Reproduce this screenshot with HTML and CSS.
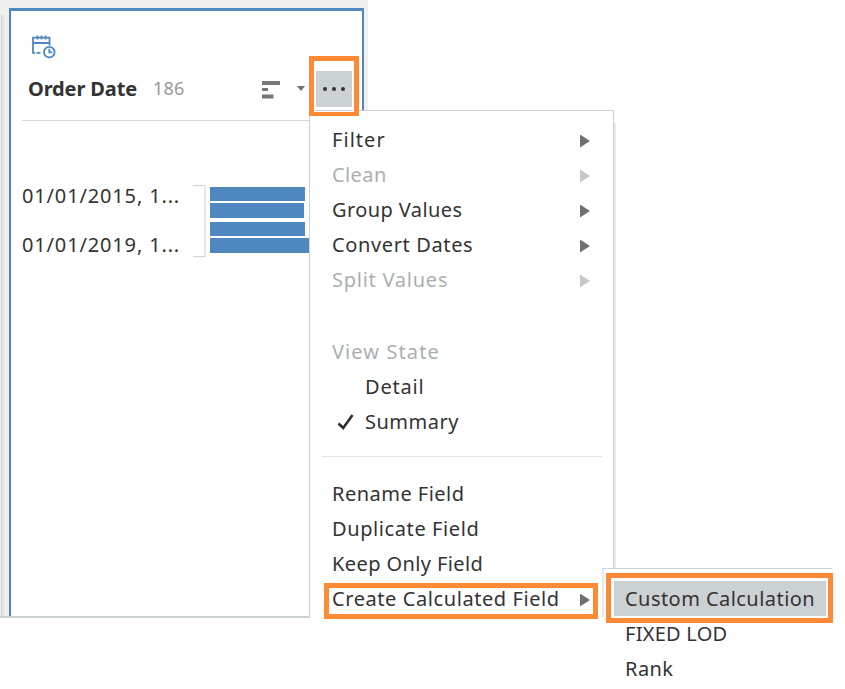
FILE: index.html
```html
<!DOCTYPE html>
<html lang="en">
<head>
<meta charset="utf-8">
<title>Order Date</title>
<link rel="stylesheet" href="styles.css">
</head>
<body>
<main class="workspace">
  <div class="pane-edge"></div>
  <section class="card">
    <svg class="date-icon" width="26" height="26" viewBox="0 0 26 26" fill="none" stroke="#4f88bf" stroke-width="1.8">
      <path d="M9.500 18.900H5.500M4 18.900H2V3.700h16.500v7.800M2 9h16.500M6.500 1.500v4M10.500 1.500v4M14.500 1.500v4"/>
      <circle cx="18.300" cy="18.200" r="5.300"/>
      <path d="M18.300 14.800v3.600h3"/>
    </svg>
    <header class="card-head">
      <h1 class="title">Order Date</h1>
      <span class="count">186</span>
      <svg class="sort" width="19" height="18" viewBox="0 0 19 18" fill="#777"><path d="M0 0h18v4H0zM0 7h6v3H0zM0 13.500h11.500v4H0z"/></svg>
      <svg class="caret" width="8" height="5" viewBox="0 0 8 5" fill="#707070"><path d="M0 0h8L4 5z"/></svg>
      <button class="more" aria-label="More"><i></i><i></i><i></i></button>
    </header>
    <div class="summary">
      <div class="labels"><span>01/01/2015, 1...</span><span>01/01/2019, 1...</span></div>
      <div class="bracket"></div>
      <div class="bars"><i class="bar"></i><i class="bar second"></i><i class="bar third"></i><i class="bar last"></i></div>
    </div>
  </section>
</main>

<nav class="menu">
  <div class="item filter">Filter<b class="arrow"></b></div>
  <div class="item off clean">Clean<b class="arrow"></b></div>
  <div class="item group">Group Values<b class="arrow"></b></div>
  <div class="item convert">Convert Dates<b class="arrow"></b></div>
  <div class="item off split">Split Values<b class="arrow"></b></div>
  <div class="item off heading">View State</div>
  <div class="item sub detail">Detail</div>
  <div class="item sub summ"><svg class="check" width="18" height="18" viewBox="0 0 18 18" fill="none" stroke="#2e2e2e" stroke-width="2.600"><path d="M1.500 10.500l4.700 4.500L15.500 2"/></svg>Summary</div>
  <hr class="divider">
  <div class="item rename">Rename Field</div>
  <div class="item duplicate">Duplicate Field</div>
  <div class="item keep">Keep Only Field</div>
  <div class="item create">Create Calculated Field<b class="arrow"></b></div>
</nav>

<nav class="submenu">
  <div class="choice active">Custom Calculation</div>
  <div class="choice fixed">FIXED LOD</div>
  <div class="choice rank">Rank</div>
</nav>

<div class="mark mark-more"></div>
<div class="mark mark-create"></div>
<div class="mark mark-custom"></div>
</body>
</html>
```
FILE: styles.css
```css
* { box-sizing: border-box; }
body {
  margin: 0;
  height: 689px;
  overflow: hidden;
  position: relative;
  background: #fff;
  color: #333;
  font: 20px/35px "Noto Sans", sans-serif;
}
.workspace {
  display: flex;
  width: 368px;
  height: 618px;
  padding: 8px 4px 0 1px;
  background: #f0f0f0;
  border-bottom: 2px solid #ccd1d5;
}
.pane-edge {
  width: 4px;
  margin: 7px 4px 0 0;
  border-left: 1px solid #ccd1d5;
  background: #e6e8e8;
}
.card {
  width: 355px;
  padding: 23px 0 0 11px;
  background: #fff;
  border: 2px solid #4f88bf;
  border-top-width: 3px;
  border-bottom: 0;
}
.date-icon { display: block; margin-left: 9px; }
.card-head {
  display: flex;
  align-items: center;
  height: 61px;
  padding: 0 0 3px 6px;
  border-bottom: 1px solid #d5d7d8;
}
.title { margin: 0; width: 125px; font-size: 20px; line-height: 30px; letter-spacing: -.13px; white-space: nowrap; }
.count { width: 109px; font-size: 18px; color: #999; letter-spacing: .2px; }
.sort { margin-top: 2px; }
.caret { margin-left: 16px; }
.more {
  display: flex;
  justify-content: center;
  align-items: center;
  gap: 5px;
  width: 36px;
  height: 36px;
  padding: 0;
  margin-left: 11px;
  border: 0;
  background: #ccd1d4;
}
.more i { width: 4px; height: 4px; border-radius: 50%; background: #333; }
.summary { display: flex; padding-top: 64px; }
.labels { width: 171px; margin-top: -1px; letter-spacing: .85px; }
.labels span { display: block; height: 49px; line-height: 24px; white-space: nowrap; }
.bracket { width: 13px; height: 72px; border: 1px solid #ccd1d5; border-left: 0; border-right: 2px solid #e6e8e8; }
.bars { display: flex; flex-direction: column; padding: 2px 0 0 4px; }
.bar { width: 95px; height: 14px; background: #4f88bf; }
.second { width: 94px; height: 15px; margin-top: 2px; }
.third { margin-top: 4px; }
.last { width: 99px; height: 15px; margin-top: 2px; }

.menu {
  position: absolute;
  left: 309px;
  top: 110px;
  width: 305px;
  height: 508px;
  padding-top: 11px;
  background: #fff;
  border: 1px solid #ccd1d5;
  border-bottom: 0;
}
.menu::after { content: ""; position: absolute; left: 304px; top: 12px; width: 2px; height: 446px; background: #e9ebeb; }
.item { display: flex; align-items: center; height: 35px; padding: 0 23px 0 22px; white-space: nowrap; letter-spacing: .4px; }
.off { color: #aaafb2; }
.filter { letter-spacing: 1.05px; }
.convert { letter-spacing: .63px; }
.split { letter-spacing: .75px; }
.detail { letter-spacing: .8px; }
.summ { letter-spacing: .5px; }
.duplicate { letter-spacing: .6px; }
.create { letter-spacing: .58px; }
.arrow { margin: 3px 0 0 auto; width: 10px; height: 13px; background: #707070; clip-path: polygon(0 0, 100% 50%, 0 100%); }
.off .arrow { background: #c4c9cc; }
.heading { margin-top: 37px; letter-spacing: 1.1px; }
.sub { padding-left: 55px; }
.check { margin: 0 10px 0 -28px; }
.divider { height: 1px; margin: 17px 11px 19px 12px; border: 0; background: #e3e4e5; }
.rename { margin-top: 0; letter-spacing: .48px; }

.submenu {
  position: absolute;
  left: 602px;
  top: 568px;
  width: 230px;
  height: 121px;
  padding: 12px 0 0 12px;
  background: #fff;
  border-top: 1px solid #ccd1d5;
}
.submenu::before { content: ""; position: absolute; left: 0; top: 0; width: 2px; height: 48px; background: #e6e8e8; }
.choice { width: 212px; height: 35px; padding-left: 11px; white-space: nowrap; letter-spacing: .45px; }
.fixed { letter-spacing: .25px; }

.active { background: #ccd1d4; }

.mark { position: absolute; border: 5px solid #ff8a36; }
.mark-more { left: 309px; top: 56px; width: 50px; height: 60px; border-bottom-width: 4px; box-shadow: inset 0 0 0 1px #fff; }
.mark-create { left: 324px; top: 583px; width: 274px; height: 36px; }
.mark-custom { left: 606px; top: 573px; width: 227px; height: 50px; }
```
